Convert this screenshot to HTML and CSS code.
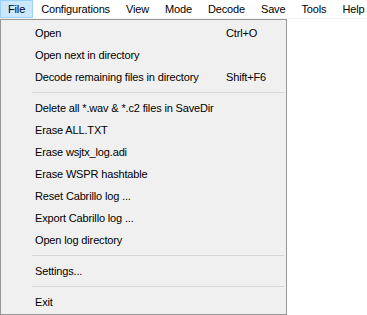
FILE: index.html
```html
<!DOCTYPE html>
<html lang="en">
<head>
    <meta charset="UTF-8">
    <meta name="viewport" content="width=device-width, initial-scale=1.0">
    <title>WSJT-X - File menu</title>
    <link rel="stylesheet" href="styles.css">
</head>
<body>
    <div class="menubar">
        <span class="menubar-item active">File</span>
        <span class="menubar-item">Configurations</span>
        <span class="menubar-item">View</span>
        <span class="menubar-item">Mode</span>
        <span class="menubar-item">Decode</span>
        <span class="menubar-item">Save</span>
        <span class="menubar-item">Tools</span>
        <span class="menubar-item">Help</span>
    </div>

    <div class="dropdown">
        <div class="menu-row"><span>Open</span><span class="shortcut">Ctrl+O</span></div>
        <div class="menu-row"><span>Open next in directory</span></div>
        <div class="menu-row"><span>Decode remaining files in directory</span><span class="shortcut">Shift+F6</span></div>
        <div class="separator"></div>
        <div class="menu-row"><span>Delete all *.wav &amp; *.c2 files in SaveDir</span></div>
        <div class="menu-row"><span>Erase ALL.TXT</span></div>
        <div class="menu-row"><span>Erase wsjtx_log.adi</span></div>
        <div class="menu-row"><span>Erase WSPR hashtable</span></div>
        <div class="menu-row"><span>Reset Cabrillo log ...</span></div>
        <div class="menu-row"><span>Export Cabrillo log ...</span></div>
        <div class="menu-row"><span>Open log directory</span></div>
        <div class="separator"></div>
        <div class="menu-row"><span>Settings...</span></div>
        <div class="separator"></div>
        <div class="menu-row"><span>Exit</span></div>
    </div>
</body>
</html>
```

FILE: styles.css
```css
* {
    margin: 0;
    padding: 0;
    box-sizing: border-box;
}

body {
    font-family: "Segoe UI", "Liberation Sans", Arial, sans-serif;
    font-size: 11px;
    letter-spacing: -0.15px;
    color: #000;
    background: #fff;
}

.menubar {
    display: flex;
    height: 19px;
    background: #fff;
    border-bottom: 1px solid #f2f2f2;
}

.menubar-item {
    height: 18px;
    line-height: 16px;
    padding: 0 7px;
    border: 1px solid transparent;
}

.menubar-item.active {
    background: #cce8ff;
    border-color: #99d1ff;
}

.dropdown {
    width: 287px;
    background: #f0f0f0;
    border: 1px solid #979797;
    padding: 2px 0 1px;
}

.menu-row {
    display: grid;
    grid-template-columns: 191px 1fr;
    height: 22px;
    line-height: 22px;
    padding-left: 34px;
    white-space: nowrap;
}

.separator {
    height: 9px;
    margin: 0 2px 0 31px;
    padding-top: 4px;
}

.separator::after {
    content: "";
    display: block;
    height: 1px;
    background: #d7d7d7;
}
```
